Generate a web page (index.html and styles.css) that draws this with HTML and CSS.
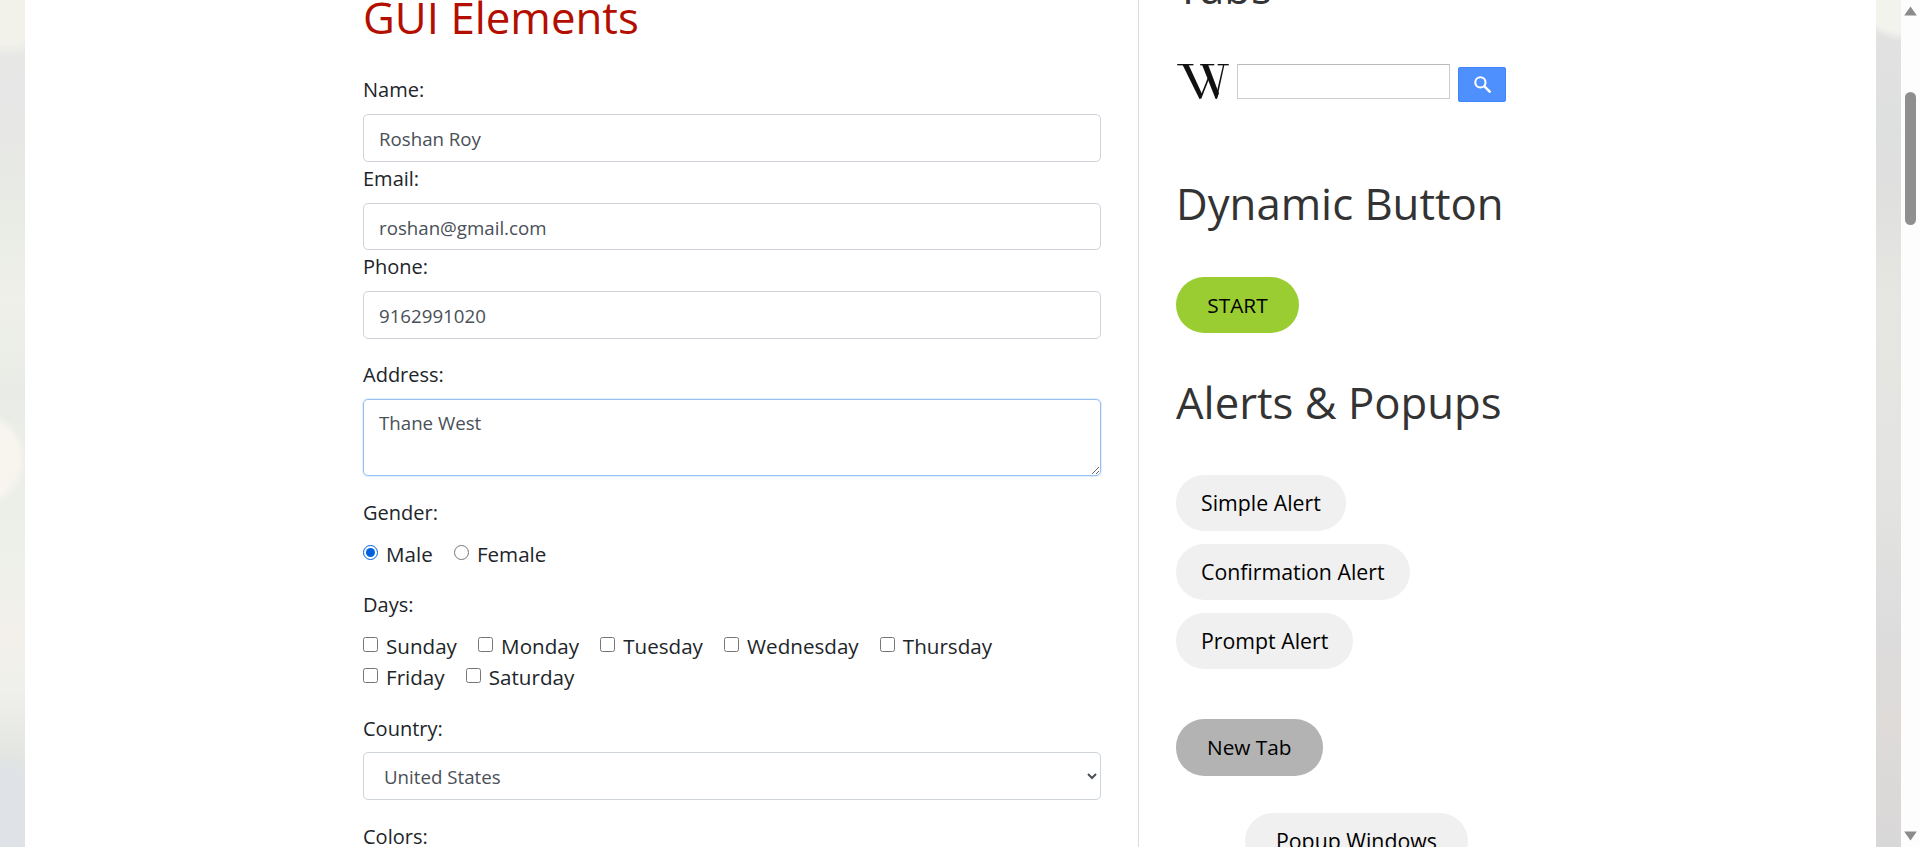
FILE: index.html
```html
<!DOCTYPE html>
<html lang="en">
<head>
<meta charset="utf-8">
<title>GUI Elements</title>
<link rel="stylesheet" href="styles.css">
</head>
<body>
<div class="window">
  <div class="bokeh bokeh-left"></div>
  <main class="sheet">
    <div class="columns">
      <section class="form-col">
        <h2 class="title">GUI Elements</h2>
        <form class="form">
          <div class="field">
            <label class="label" for="name">Name:</label>
            <input class="control" id="name" type="text" value="Roshan Roy">
          </div>
          <div class="field">
            <label class="label" for="email">Email:</label>
            <input class="control" id="email" type="text" value="roshan@gmail.com">
          </div>
          <div class="field">
            <label class="label" for="phone">Phone:</label>
            <input class="control" id="phone" type="text" value="9162991020">
          </div>
          <div class="field field-address">
            <label class="label" for="address">Address:</label>
            <textarea class="control area" id="address">Thane West</textarea>
          </div>
          <div class="field field-gender">
            <span class="label">Gender:</span>
            <div class="checks">
              <label class="check"><input type="radio" name="gender" checked>Male</label>
              <label class="check"><input type="radio" name="gender">Female</label>
            </div>
          </div>
          <div class="field field-days">
            <span class="label">Days:</span>
            <div class="checks days">
              <label class="check"><input type="checkbox">Sunday</label>
              <label class="check"><input type="checkbox">Monday</label>
              <label class="check"><input type="checkbox">Tuesday</label>
              <label class="check"><input type="checkbox">Wednesday</label>
              <label class="check"><input type="checkbox">Thursday</label>
              <label class="check"><input type="checkbox">Friday</label>
              <label class="check"><input type="checkbox">Saturday</label>
            </div>
          </div>
          <div class="field field-country">
            <label class="label" for="country">Country:</label>
            <select class="control select" id="country"><option>United States</option></select>
          </div>
          <div class="field field-colors">
            <span class="label">Colors:</span>
          </div>
        </form>
      </section>
      <aside class="side-col">
        <h2 class="side-title tabs-title">Tabs</h2>
        <div class="wiki">
          <svg class="wiki-logo" viewBox="0 0 153 104" width="52" height="35" role="img" aria-label="Wikipedia">
            <g fill="#111">
              <rect x="0" y="0" width="48" height="4"/>
              <rect x="68" y="0" width="42" height="4"/>
              <rect x="120" y="0" width="33" height="4"/>
              <path d="M16 3H34L74 90 69 104H66Z"/>
              <path d="M68 98 92 38 95 43 71 104Z"/>
              <path d="M74 3H92L124 88 117 104H114Z"/>
              <path d="M114 98 136 3H140L118 104Z"/>
            </g>
          </svg>
          <input class="wiki-input" type="text" aria-label="Search">
          <button class="wiki-btn" type="button" aria-label="Search">
            <svg class="wiki-icon" viewBox="0 0 13 13" width="17" height="17"><circle cx="4.9" cy="4.9" r="3.9" fill="none" stroke="#fff" stroke-width="1.6"/><path d="M8 8 12 12" stroke="#fff" stroke-width="1.9" stroke-linecap="round"/></svg>
          </button>
        </div>
        <h2 class="side-title dyn-title">Dynamic Button</h2>
        <button class="pill pill-start" type="button">START</button>
        <h2 class="side-title alerts-title">Alerts &amp; Popups</h2>
        <div class="alerts">
          <button class="pill pill-alert" type="button">Simple Alert</button>
          <button class="pill pill-alert" type="button">Confirmation Alert</button>
          <button class="pill pill-alert" type="button">Prompt Alert</button>
        </div>
        <button class="pill pill-tab" type="button">New Tab</button>
        <button class="pill pill-popup" type="button">Popup Windows</button>
      </aside>
    </div>
  </main>
  <div class="bokeh bokeh-right"></div>
  <div class="scrollbar">
    <svg class="arrow" viewBox="0 0 13 10" width="13" height="10"><path d="M6.5 0.5 12.8 9.5H0.2Z" fill="#8b8b8b"/></svg>
    <div class="thumb"></div>
    <svg class="arrow arrow-down" viewBox="0 0 13 10" width="13" height="10"><path d="M0.2 0.5H12.8L6.5 9.5Z" fill="#8b8b8b"/></svg>
  </div>
</div>
</body>
</html>
```
FILE: styles.css
```css
* { box-sizing: border-box; }
html, body { margin: 0; height: 100%; overflow: hidden; }
body { font-family: "Open Sans", "Liberation Sans", sans-serif; color: #212529; background: #fff; }

.window { display: flex; height: 847px; overflow: hidden; }

.bokeh { flex: 0 0 25px; }
.bokeh-left {
  background:
    radial-gradient(circle at -22px 459px, #f7f5ee 0 40px, rgba(247,245,238,0) 50px),
    radial-gradient(circle at 8px 8px, #f2f2ea 0 36px, rgba(242,242,234,0) 48px),
    radial-gradient(circle at 2px 810px, #dfe3e8 0 35px, rgba(223,227,232,0) 60px),
    linear-gradient(180deg, #e9ebe6 0, #e6e7e6 90px, #e9ebe5 220px, #eff0ea 300px, #e9ebe6 390px, #eef0ea 560px, #f3f0ea 640px, #eff0ec 690px, #e3e5e1 760px, #e0e2e0 847px);
}
.bokeh-right {
  background:
    radial-gradient(circle at 30px -20px, #f3f3ee 0 52px, rgba(243,243,238,0) 62px),
    linear-gradient(180deg, #e2e3e1 0, #dedfdf 130px, #e0e0df 200px, #e6e6e2 300px, #e3e3e2 500px, #dddcdc 640px, #dedbd9 720px, #d9d8d8 847px);
}

.sheet { flex: 1 1 auto; background: #fff; padding-left: 338px; min-width: 0; }
.columns { display: flex; align-items: flex-start; margin-top: -12px; }

.form-col { flex: 0 0 738px; }
.title { margin: 1px 0 0; font-weight: 400; font-size: 43.8px; line-height: 57px; color: #b30f00; }
.form { margin-top: 27px; }

.field { display: block; }
.label { display: block; height: 33px; margin: 0 0 8px; font-size: 20px; line-height: 33px; color: #212529; }

.control {
  display: block; width: 100%; height: 47.5px; padding: 8px 15px 6px;
  font: 18.7px/30px "Open Sans", "Liberation Sans", sans-serif; color: #495057;
  background: #fff; border: 1px solid #ced4da; border-radius: 5px; outline: 0;
}
.field + .field-address { margin-top: 19.5px; }
.area {
  height: 77px; padding-top: 8px; border-color: #97c1f0; box-shadow: 0 0 0 1px rgba(13,110,253,.12);
  resize: both;
}
.field + .field-gender { margin-top: 22px; }
.field-gender .label, .field-days .label, .field-colors .label { line-height: 30px; }
.checks { display: flex; flex-wrap: wrap; column-gap: 21.2px; }
.check { display: inline-flex; align-items: center; height: 31px; font-size: 20.6px; line-height: 31px; color: #212529; }
.check input { flex: none; width: 15px; height: 15px; margin: 0 8px 0 0; accent-color: #0060df; position: relative; top: -2px; }
.field-gender .checks { height: 31px; }
.field + .field-days { margin-top: 20px; }
.days { max-width: 660px; }
.field + .field-country { margin-top: 20px; }
.field-country .label { margin-bottom: 6px; line-height: 31px; }
.select { padding-left: 16px; }
.field + .field-colors { margin-top: 22.5px; }

.side-col { flex: 0 0 auto; margin-left: 37px; border-left: 1px solid #dcdcdc; padding-left: 37px; height: 900px; }
.side-title { margin: 0; font-weight: 400; font-size: 43.7px; line-height: 58px; color: #333; white-space: nowrap; }
.tabs-title { margin-top: -30px; }

.wiki { display: flex; align-items: flex-start; margin-top: 48px; }
.wiki-logo { display: block; flex: none; margin-left: 1px; }
.wiki-input { width: 213px; height: 35px; margin-left: 8px; border: 1px solid #ccc; border-top-color: #bbb; background: #fff; outline: 0; }
.wiki-btn { display: flex; align-items: center; justify-content: center; width: 48px; height: 35px; margin: 3px 0 0 8px; padding: 0; background: #4d90fe; border: 1px solid #3f86fa; border-radius: 2px; }
.wiki-icon { display: block; }

.dyn-title { margin-top: 72px; }

.pill { display: block; height: 56px; border: 0; border-radius: 28px; font: 21.3px/1 "Open Sans", "Liberation Sans", sans-serif; color: #000; background: #f0f0f0; white-space: nowrap; }
.pill-start { width: 123px; margin: 45px 0 0; padding: 0; background: #9acd32; font-size: 20.8px; }
.alerts-title { margin-top: 40px; }
.alerts { display: flex; flex-direction: column; align-items: flex-start; row-gap: 13px; margin: 44px 0 0; }
.pill-alert { padding: 0 25px; }
.pill-tab { margin: 50px 0 0; height: 57px; padding: 0 31px; background: #b3b3b3; font-size: 20.8px; }
.pill-popup { margin: 37px 0 0 69px; padding: 0 31px; }

.scrollbar { flex: 0 0 19px; display: flex; flex-direction: column; align-items: center; background: #fdfdfd; padding: 6px 0; }
.arrow { display: block; flex: none; }
.thumb { flex: none; width: 11px; height: 133px; margin-top: 76px; background: #8f8f8f; border-radius: 6px; }
.arrow-down { margin-top: auto; }
```
